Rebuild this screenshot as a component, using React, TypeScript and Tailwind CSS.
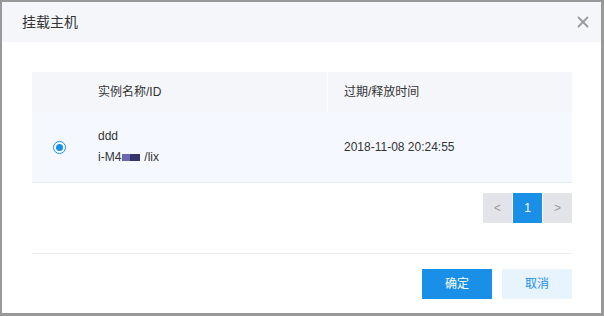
const cjk = "font-['Liberation_Sans','Noto_Sans_CJK_SC',sans-serif]";

const CloseIcon = () => (
  <svg width="12" height="12" viewBox="0 0 12 12" className="block">
    <path d="M1.5 1.5L10.5 10.5M10.5 1.5L1.5 10.5" stroke="#9a9a9a" strokeWidth="1.8" strokeLinecap="round" />
  </svg>
);

const Radio = () => (
  <span className="flex h-[13px] w-[13px] items-center justify-center rounded-full border-[1.5px] border-[#1a8fe8] bg-white">
    <span className="h-[7px] w-[7px] rounded-full bg-[#1a8fe8]" />
  </span>
);

const MountHostDialog = () => {
  return (
    <div className={`h-[316px] w-[604px] border-t-2 border-l-2 border-r-[3px] border-b-[3px] border-[#999999] bg-white ${cjk}`}>
      <div className="flex h-[40px] items-center justify-between bg-[#f5f6fa] pl-[20px] pr-[12px]">
        <span className="text-[14px] text-[#333]">挂载主机</span>
        <CloseIcon />
      </div>

      <div className="ml-[30px] w-[540px] pt-[30px]">
        {/* table */}
        <div className="border-b border-[#e8ebf2] text-[12px] text-[#333]">
          <div className="flex h-[40px] items-center bg-[#f5f6fa]">
            <div className="w-[54px]" />
            <div className="flex h-full w-[241px] items-center pl-[12px]">实例名称/ID</div>
            <div className="h-full w-px bg-white" />
            <div className="pl-[16px]">过期/释放时间</div>
          </div>
          <div className="flex h-[70px] items-center bg-[#f5f9ff]">
            <div className="flex w-[54px] justify-center">
              <Radio />
            </div>
            <div className="flex w-[242px] flex-col gap-[8px] pl-[12px] leading-[13px]">
              <span>ddd</span>
              <span className="flex items-center">
                i-M4
                <span className="ml-[1px] inline-block h-[7px] w-[8px] bg-[#6c68b0]" />
                <span className="inline-block h-[7px] w-[10px] bg-[#35336e]" />
                <span className="ml-[4px]">/lix</span>
              </span>
            </div>
            <div className="pl-[16px]">2018-11-08 20:24:55</div>
          </div>
        </div>

        {/* pagination */}
        <div className="mt-[10px] flex justify-end gap-px text-[12px]">
          <button className="h-[30px] w-[29px] bg-[#e2e4ea] text-[#999]">&lt;</button>
          <button className="h-[30px] w-[29px] bg-[#1a8fe8] text-white">1</button>
          <button className="h-[30px] w-[29px] bg-[#e2e4ea] text-[#999]">&gt;</button>
        </div>

        <div className="mt-[30px] h-px bg-[#eaecf3]" />

        <div className="mt-[15px] flex justify-end gap-[10px] text-[12px]">
          <button className="h-[30px] w-[70px] bg-[#1a8fe8] text-white">确定</button>
          <button className="h-[30px] w-[70px] bg-[#e8f4fd] text-[#1a8fe8]">取消</button>
        </div>
      </div>
    </div>
  );
};

export default function App() {
  return <MountHostDialog />;
}
